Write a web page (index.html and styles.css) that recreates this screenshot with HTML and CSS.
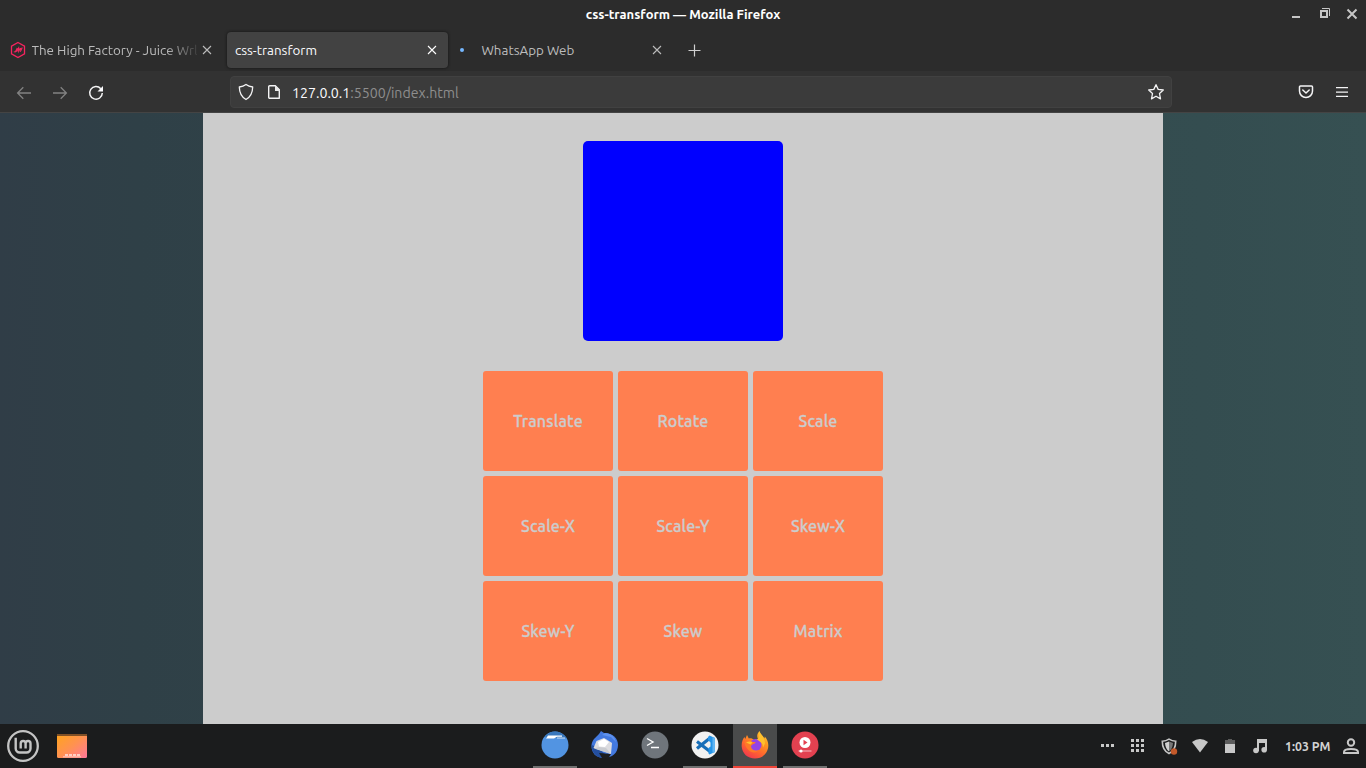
FILE: index.html
```html
<!DOCTYPE html>
<html lang="en">
<head>
<meta charset="utf-8">
<title>css-transform</title>
<link rel="stylesheet" href="styles.css">
</head>
<body>
<header class="titlebar">
  <span class="title">css-transform — Mozilla Firefox</span>
  <svg class="window-controls" width="70" height="28" viewBox="0 0 70 28">
    <path fill="#c6c6c6" d="M0 16h8v2H0z"/>
    <path fill="none" stroke="#c6c6c6" stroke-width="2" d="M29 11h6v6h-6z"/>
    <path fill="none" stroke="#c6c6c6" d="M30 8.500h7.500V16"/>
    <path fill="none" stroke="#c6c6c6" stroke-width="2" d="M55.500 9.500l9 9m0-9l-9 9"/>
  </svg>
</header>

<nav class="tabs">
  <div class="tab tab-first">
    <svg width="16" height="18" viewBox="0 0 16 18" fill="none" stroke="#f5245f">
      <path stroke-width="1.300" d="M8 1.500l6.500 3.700v7.600L8 16.500l-6.500-3.700V5.200z"/>
      <path stroke-width="1.100" d="M3.800 10.800l1.500.2L7.300 7M6.600 10.800l2-3.800.1 3.300L10.400 7m.2 0l.2 2.800L12.300 6.500M10.800 9.800l-.6 1"/>
    </svg>
    <span class="tab-label faded">The High Factory - Juice Wrl</span>
    <svg class="x" width="10" height="10" viewBox="0 0 10 10"><path d="M1 1l8 8m0-8L1 9"/></svg>
  </div>
  <div class="tab tab-active">
    <span class="tab-label">css-transform</span>
    <svg class="x" width="10" height="10" viewBox="0 0 10 10"><path d="M1 1l8 8m0-8L1 9"/></svg>
  </div>
  <div class="tab tab-loading">
    <i class="loading-dot"></i>
    <span class="tab-label">WhatsApp Web</span>
    <svg class="x" width="10" height="10" viewBox="0 0 10 10"><path d="M1 1l8 8m0-8L1 9"/></svg>
  </div>
  <svg class="new-tab" width="13" height="13" viewBox="0 0 13 13"><path d="M6.500 .5v12M.5 6.500h12"/></svg>
</nav>

<div class="toolbar">
  <div class="nav-buttons">
    <svg class="dim" width="16" height="16" viewBox="0 0 16 16"><path d="M15 8H1.500M7.300 2.300L1.600 8l5.700 5.700"/></svg>
    <svg class="dim" width="16" height="16" viewBox="0 0 16 16"><path d="M1 8h13.500M8.700 2.300L14.400 8l-5.700 5.700"/></svg>
    <svg width="16" height="16" viewBox="0 0 16 16"><path stroke-width="1.500" d="M12.800 3.800A6.300 6.300 0 1 0 14.300 8"/><path fill="#fbfbfe" stroke="none" d="M15 1v5.500H9.500z"/></svg>
  </div>
  <div class="address">
    <svg width="16" height="18" viewBox="0 0 16 18"><path stroke-width="1.300" stroke-linejoin="round" d="M8 1.500c2 1.500 4.200 2.200 6.700 2.500-.1 5.500-1.700 9.700-6.700 12.500C3 13.700 1.400 9.500 1.300 4 3.800 3.700 6 3 8 1.500z"/></svg>
    <svg width="16" height="16" viewBox="0 0 16 16"><path stroke-width="1.400" stroke-linejoin="round" d="M3.700 1.700h5.600l4 4v8.600H3.700a1 1 0 0 1-1-1V2.700a1 1 0 0 1 1-1z"/><path fill="#e8e8e8" stroke="none" d="M9 1l5 5v1H9z"/></svg>
    <p class="url"><span class="host">127.0.0.1</span><span class="path">:5500/index.html</span></p>
    <svg class="star" width="18" height="18" viewBox="0 0 18 18"><path stroke-width="1.300" stroke-linejoin="round" d="M9 1.700l2.200 4.700 5.100.6-3.800 3.500 1 5.400L9 13.200l-4.500 2.700 1-5.400L1.700 7l5.100-.6z"/></svg>
  </div>
  <div class="tools">
    <svg width="16" height="14" viewBox="0 0 16 14"><path stroke-width="1.500" stroke-linejoin="round" stroke-linecap="round" d="M2.500 1h11a1 1 0 0 1 1 1v4a6.500 6.500 0 0 1-13 0V2a1 1 0 0 1 1-1zM4.800 5L8 8l3.200-3"/></svg>
    <svg width="12" height="10" viewBox="0 0 12 10"><path stroke-width="1.250" d="M0 .6h12M0 5h12M0 9.400h12"/></svg>
  </div>
</div>

<main class="page">
  <section class="content">
    <div class="box"></div>
    <div class="buttons">
      <button>Translate</button><button>Rotate</button><button>Scale</button>
      <button>Scale-X</button><button>Scale-Y</button><button>Skew-X</button>
      <button>Skew-Y</button><button>Skew</button><button>Matrix</button>
    </div>
  </section>
</main>

<footer class="panel">
  <div class="launchers">
    <svg width="34" height="34" viewBox="0 0 34 34" fill="none" stroke="#c4c4c4">
      <circle cx="17" cy="17" r="14.800" stroke-width="2.300"/>
      <path stroke-width="2.400" d="M9.700 8.700v10.800a4 4 0 0 0 4 4h6.800a4 4 0 0 0 4-4V14.500a2.450 2.450 0 0 0-4.900 0V19.500m0-5a2.450 2.450 0 0 0-4.900 0V19.500"/>
    </svg>
    <svg width="30" height="24" viewBox="0 0 30 24">
      <defs><linearGradient id="desk" x1="0" y1="0" x2="1" y2="1"><stop stop-color="#ffa41c"/><stop offset=".5" stop-color="#ff9250"/><stop offset="1" stop-color="#ff779b"/></linearGradient></defs>
      <rect width="30" height="24" rx="1.500" fill="url(#desk)"/>
      <path fill="#805026" d="M0 1q0-1 1-1h28q1 0 1 1v1H0z"/>
      <path stroke="#ffd0c4" stroke-width="2" stroke-dasharray="3 1" d="M8 21h15"/><path stroke="#ffb5a4" stroke-width="1.500" d="M6 22.700h18"/>
    </svg>
  </div>

  <div class="apps">
    <div class="app running">
      <svg width="28" height="28" viewBox="0 0 28 28"><circle cx="14" cy="14" r="13.500" fill="#5294e2"/><path fill="#3978bd" d="M4 5a13.500 13.500 0 0 1 20 0l1.500 2H5z"/><path fill="#fff" d="M7 4.500h14v1.200h-5L13 7.500H5z"/><path fill="#d4e4f6" d="M16 6.500h8v1h-8z"/></svg>
    </div>
    <div class="app">
      <svg width="30" height="30" viewBox="0 0 30 30"><path fill="#4379df" d="M9 4l2-3 3 2c9 0 14 5 14 12 0 8-6 13-14 13S1.500 23 1.500 16c0-3 1-5 2.500-7z"/><path fill="#244f9f" d="M1.500 15l3 1 12 9-1 3C7 29 1.500 23 1.500 15z"/><path fill="#1b1d20" d="M9 23l12 1-3 5-6-1z"/><path fill="#dcdce0" d="M3.500 18l3-7 7.500-3 5 3 3 2-1 11z"/><path fill="#fff" d="M8 12l6-3 5 3-4 5-6-.5z"/><path fill="#c9cbd0" d="M4 18.500l5-1.500 7 1 5 6z"/><path fill="#5f92ee" d="M15 3c6 0 10 4 11 9l-5-5-9-2z"/></svg>
    </div>
    <div class="app">
      <svg width="28" height="28" viewBox="0 0 28 28" fill="none"><circle cx="14" cy="14" r="13.500" fill="#6f757b"/><path stroke="#fff" stroke-width="1.400" d="M6 7.500l6 3.500-6 3.500M10 16.500h8"/></svg>
    </div>
    <div class="app running">
      <svg width="28" height="28" viewBox="0 0 28 28"><circle cx="14" cy="14" r="13.500" fill="#f1f1f1"/><path fill="none" stroke="#176eb8" stroke-width="3.200" d="M6 10.500l13 10M6 17.500L19 7"/><path fill="#2494e8" d="M18.500 4.500L24 7v14l-5.500 2.500-1-1V17l2-1.500v-4L17 9V6z"/><path fill="#60b5f3" d="M21.500 6L24 7v14l-2.500 1z"/></svg>
    </div>
    <div class="app running current">
      <svg width="28" height="28" viewBox="0 0 28 28">
        <defs><linearGradient id="fox" x1=".9" y1="0" x2=".3" y2="1"><stop stop-color="#ffd43b"/><stop offset=".35" stop-color="#ff981f"/><stop offset=".7" stop-color="#ff6330"/><stop offset="1" stop-color="#f0394e"/></linearGradient></defs>
        <path fill="url(#fox)" d="M.7 15.500C.4 11.500 1.800 8 3.500 6l.7 2L6 4l1.800 3.500c2-.5 4 .2 5.200 1.500l4-1c-1.500-3-.8-5.500 1.500-8 1 3.500 3.500 4.500 5 7.500l.3-2c2.500 3 3.700 6 3.500 9.500C27 22 21.500 27.500 14 27.500S1.200 22.500.7 15.500z"/>
        <circle cx="14.500" cy="14" r="6" fill="#9543e6"/>
        <path fill="#ff7928" d="M3.500 11c3-2 6-2 8 0h3c0 2-4 2-4.500 4.500.5 3.500 4 5 8 3.500-4 5-13 2-14.500-8z"/>
        <path fill="#ffc12d" d="M18.500.5c1 4 5.500 5.500 5.500 12l-2 4c0-6-4-5.500-6-8.500 3 .5 1-4 2.500-7.500zM5 11.500c3-1.500 5-1 6.500 0l-2 2z"/>
      </svg>
    </div>
    <div class="app running">
      <svg width="28" height="28" viewBox="0 0 28 28"><circle cx="14" cy="14" r="13.500" fill="#e34150"/><circle cx="14" cy="11.500" r="5.500" fill="#fff"/><path fill="#e34150" d="M12.500 8.800v5.400l4-2.700z"/><path stroke="#fff" stroke-opacity=".65" d="M7.500 20h13"/><circle cx="10" cy="20" r="1.600" fill="#fff"/></svg>
    </div>
  </div>

  <div class="tray">
    <svg width="14" height="4" viewBox="0 0 14 4" fill="#c8c8c8"><path d="M0 0h3v3H0zM5 0h3v3H5zM10 0h3v3h-3z"/></svg>
    <svg width="14" height="14" viewBox="0 0 14 14" fill="#c8c8c8"><path d="M0 0h3v3H0zM5 0h3v3H5zM10 0h3v3h-3zM0 5h3v3H0zM5 5h3v3H5zM10 5h3v3h-3zM0 10h3v3H0zM5 10h3v3H5zM10 10h3v3h-3z"/></svg>
    <svg class="shield" width="17" height="17" viewBox="0 0 17 17"><path fill="none" stroke="#c6c6c6" stroke-width="1.600" d="M8 1.200c2 1.300 4 2 6.700 2C14.700 9 13 13.200 8 15.500 3 13.200 1.300 9 1.300 3.200c2.700 0 4.700-.7 6.700-2z"/><path fill="#d0d0d0" d="M8 3.500L4 5c.3 4 1.500 6.700 4 8.500z"/><path fill="#777" d="M8 3.500L12 5c-.3 4-1.500 6.700-4 8.500z"/><circle cx="13" cy="13.500" r="3.200" fill="#c3592a"/></svg>
    <svg width="16" height="14" viewBox="0 0 16 14"><path fill="#c8c8c8" d="M0 3q8-6 16 0L8 13.500z"/></svg>
    <svg class="battery" width="10" height="15" viewBox="0 0 10 15"><path fill="#5c5c5c" d="M3 0h4v1h3v4H0V1h3z"/><path fill="#c8c8c8" d="M0 5h10v9H0z"/></svg>
    <svg class="music" width="14" height="15" viewBox="0 0 14 15"><path fill="#c8c8c8" d="M4 0h10v11h-2V4H6v8H4z"/><circle cx="3" cy="11.500" r="2.800" fill="#c8c8c8"/><circle cx="11.200" cy="10.800" r="2.800" fill="#c8c8c8"/></svg>
    <span class="clock">1:03 PM</span>
    <svg width="16" height="17" viewBox="0 0 16 17" fill="none" stroke="#c8c8c8" stroke-width="2"><circle cx="8" cy="4.500" r="3.200"/><path d="M1 15v-1c0-4 14-4 14 0v1z"/></svg>
  </div>
</footer>
</body>
</html>
```
FILE: styles.css
```css
* { box-sizing: border-box; }
body {
  margin: 0;
  width: 1366px;
  height: 768px;
  overflow: hidden;
  display: flex;
  flex-direction: column;
  background: #2c2c2c;
  font-family: Ubuntu, "Noto Sans", sans-serif;
  font-size: 13.400px;
}
svg { display: block; flex: none; }

.titlebar {
  height: 28px;
  display: grid;
  grid-template-columns: 1fr auto 1fr;
  align-items: center;
  color: #fff;
}
.title { grid-column: 2; font-weight: 600; font-size: 13px; white-space: nowrap; }
.window-controls { justify-self: end; margin-right: 4px; }

.tabs { height: 43px; display: flex; align-items: center; }
.tab { height: 36px; display: flex; align-items: center; color: #bcbcbc; white-space: nowrap; margin-top: 1px; }
.tab-first { width: 227px; padding-left: 10px; }
.tab-first .tab-label { width: 168px; margin-left: 5.500px; }
.faded { -webkit-mask-image: linear-gradient(to right, #000 134px, transparent 170px); mask-image: linear-gradient(to right, #000 134px, transparent 170px); }
.tab-first .x { margin-left: 2.500px; }
.tab-active {
  width: 221px;
  padding: 0 11px 0 8px;
  justify-content: space-between;
  color: #fbfbfe;
  background: #424242;
  border-radius: 4px;
  box-shadow: 0 0 3px #111;
}
.tab-loading { width: 225px; padding: 0 11px 0 12px; }
.loading-dot { width: 4px; height: 4px; border-radius: 2px; background: #75b8ff; }
.tab-loading .tab-label { margin-left: 17.500px; flex: 1; }
.x { fill: none; stroke: #bcbcbc; stroke-width: 1.100; }
.tab-active .x { stroke: #fff; }
.new-tab { fill: none; stroke: #d0d0d0; stroke-width: 1.200; margin-left: 15px; margin-top: 1px; }

.toolbar {
  height: 42px;
  display: flex;
  align-items: center;
  background: #323232;
  border-bottom: 1px solid #444;
}
.toolbar svg { fill: none; stroke: #f4f4f5; }
.nav-buttons { width: 230px; display: flex; gap: 20px; padding-left: 16px; padding-top: 2px; }
.nav-buttons .dim { stroke: #828282; stroke-width: 1.300; }
.address {
  width: 942px;
  height: 32px;
  display: flex;
  align-items: center;
  padding: 0 7px;
  gap: 12px;
  background: #3b3b3b;
  border: 1px solid #414141;
  border-radius: 4px;
  margin-top: 1px;
}
.url { margin: 0 0 0 -2px; padding-top: 2px; flex: 1; font-size: 14.150px; }
.host { color: #fbfbfe; }
.path { color: #8e8e8e; }
.address .star { margin-right: -1px; }
.tools { display: flex; align-items: center; gap: 22px; margin-left: 126px; }

.page {
  height: 611px;
  display: flex;
  justify-content: center;
  background: linear-gradient(to right, #303d47, #2f4047 10%, #344d50 88%, #365052);
}
.content {
  width: 960px;
  background: #ccc;
  display: flex;
  flex-direction: column;
  align-items: center;
  padding-top: 28px;
  gap: 30px;
}
.box { width: 200px; height: 200px; background: #00f; border-radius: 5px; }
.buttons { display: grid; grid-template-columns: repeat(3, 130px); grid-auto-rows: 100px; gap: 5px; }
.buttons button {
  border: 0;
  padding: 0;
  border-radius: 3px;
  background: #ff7f50;
  color: #ccc;
  font: 500 16px Ubuntu, "Noto Sans", sans-serif;
  letter-spacing: .18px;
  -webkit-text-stroke: .3px #ccc;
}

.panel {
  height: 44px;
  display: grid;
  grid-template-columns: 533px 1fr 266px;
  background: #1b1c1d;
}
.launchers { display: flex; align-items: center; gap: 17px; padding-left: 6px; }
.apps { display: flex; gap: 6px; }
.app { width: 44px; height: 44px; display: flex; align-items: center; justify-content: center; padding-bottom: 2px; border-bottom: 0 solid #707070; }
.running { border-bottom-width: 2px; padding-bottom: 0; }
.current { background: #4a4b4b; border-bottom-color: #f04438; }
.tray { display: flex; align-items: center; padding: 0 0 0 1px; gap: 16px; color: #d2d2d2; }
.tray .shield { margin-right: -2px; }
.tray .battery { margin: 0 1px; }
.tray .music { margin: 0 2px 0 1px; }
.clock { font-size: 12.300px; font-weight: 700; width: 47px; margin-right: -5px; white-space: nowrap; }
```
